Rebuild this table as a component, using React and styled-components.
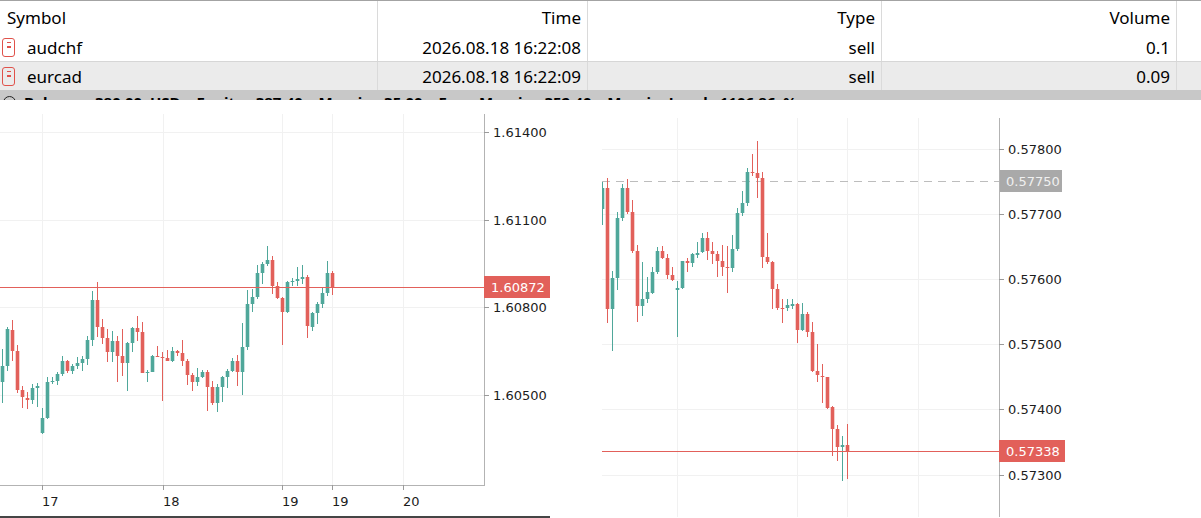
import React from 'react';
import styled, { createGlobalStyle } from 'styled-components';

const GREEN = '#4fa79a';
const RED = '#e2605a';

const orders = [
  { id: 1, symbol: 'audchf', time: '2026.08.18 16:22:08', type: 'sell', volume: '0.1' },
  { id: 2, symbol: 'eurcad', time: '2026.08.18 16:22:09', type: 'sell', volume: '0.09' },
];

// [dir, bodyTop, bodyBottom, wickTop, wickBottom] in page pixels
const leftCandles = [
  ['g', 367, 383, 350, 404], ['g', 330, 367, 328, 372], ['r', 331, 352, 321, 362], ['r', 352, 391, 346, 394],
  ['r', 391, 398, 387, 409], ['r', 399, 401, 393, 410], ['g', 389, 401, 385, 405], ['g', 387, 389, 384, 408],
  ['g', 419, 434, 409, 435], ['g', 383, 419, 378, 420], ['g', 382, 383, 378, 385], ['g', 375, 382, 373, 386],
  ['g', 362, 375, 357, 377], ['r', 362, 372, 361, 374], ['g', 367, 372, 365, 375], ['g', 364, 367, 358, 370],
  ['g', 360, 364, 357, 372], ['g', 341, 360, 337, 366], ['g', 301, 341, 292, 347], ['r', 301, 328, 283, 338],
  ['r', 328, 339, 320, 345], ['r', 339, 353, 330, 363], ['g', 342, 353, 332, 363], ['r', 342, 357, 337, 383],
  ['r', 357, 364, 330, 377], ['g', 344, 364, 343, 392], ['g', 329, 344, 328, 353], ['r', 329, 333, 317, 342],
  ['r', 333, 374, 323, 374], ['g', 373, 374, 371, 383], ['g', 357, 373, 356, 373], ['r', 357, 358, 347, 358],
  ['r', 358, 359, 353, 402], ['r', 359, 362, 351, 362], ['g', 352, 362, 348, 363], ['r', 352, 354, 351, 357],
  ['r', 354, 362, 341, 367], ['r', 362, 376, 360, 386], ['r', 376, 383, 374, 392], ['g', 378, 383, 369, 387],
  ['g', 373, 378, 371, 379], ['r', 373, 388, 371, 412], ['r', 388, 404, 382, 406], ['g', 388, 404, 385, 413],
  ['g', 378, 388, 377, 403], ['g', 372, 378, 370, 389], ['g', 362, 372, 359, 373], ['r', 362, 373, 356, 387],
  ['g', 348, 373, 324, 396], ['g', 305, 348, 291, 351], ['g', 298, 305, 290, 313], ['g', 274, 298, 266, 300],
  ['g', 265, 274, 263, 285], ['g', 261, 265, 247, 267], ['r', 261, 287, 257, 295], ['r', 287, 299, 283, 300],
  ['r', 299, 313, 298, 346], ['g', 283, 313, 282, 314], ['g', 282, 283, 279, 287], ['g', 280, 282, 268, 287],
  ['g', 278, 280, 266, 285], ['r', 278, 327, 276, 339], ['g', 314, 328, 313, 332], ['g', 305, 314, 303, 325],
  ['g', 294, 305, 288, 309], ['g', 274, 294, 262, 297], ['r', 274, 289, 272, 296],
];

const rightCandles = [
  ['g', 189, 210, 183, 226], ['r', 189, 310, 179, 324], ['g', 279, 310, 272, 352], ['g', 219, 279, 213, 291],
  ['g', 189, 219, 185, 222], ['r', 189, 213, 180, 215], ['r', 213, 252, 201, 254], ['r', 252, 307, 246, 323],
  ['g', 300, 307, 263, 317], ['g', 293, 300, 278, 304], ['g', 273, 294, 268, 295], ['g', 252, 273, 248, 275],
  ['r', 252, 259, 247, 260], ['r', 259, 276, 255, 280], ['r', 276, 281, 268, 282], ['g', 289, 291, 282, 338],
  ['g', 262, 289, 262, 290], ['r', 262, 264, 259, 273], ['g', 255, 264, 254, 268], ['g', 254, 256, 243, 259],
  ['g', 239, 253, 234, 254], ['r', 239, 252, 233, 261], ['r', 252, 255, 243, 265], ['r', 255, 262, 252, 278],
  ['r', 262, 268, 246, 277], ['r', 268, 269, 247, 294], ['g', 250, 269, 236, 273], ['g', 214, 250, 209, 252],
  ['g', 204, 214, 192, 217], ['g', 173, 204, 169, 207], ['r', 173, 174, 155, 177], ['r', 174, 179, 142, 199],
  ['r', 179, 258, 173, 269], ['r', 258, 263, 234, 265], ['r', 263, 290, 262, 310], ['r', 290, 309, 285, 311],
  ['r', 309, 310, 300, 324], ['g', 306, 309, 300, 312], ['g', 305, 307, 300, 310], ['r', 305, 331, 304, 344],
  ['g', 315, 331, 304, 332], ['r', 315, 333, 313, 338], ['r', 333, 372, 323, 373], ['r', 372, 376, 345, 383],
  ['r', 377, 378, 365, 404], ['r', 378, 409, 378, 410], ['r', 408, 430, 407, 457], ['r', 430, 448, 426, 462],
  ['g', 446, 448, 437, 482], ['r', 446, 452, 425, 480],
];

const leftChart = {
  view: [0, 101, 550, 415],
  plot: { x1: 0, x2: 484, y1: 115, y2: 486 },
  firstX: 2,
  candles: leftCandles,
  vGrid: [42, 163, 282, 332, 403],
  hGrid: [133, 221, 308, 396],
  yLabels: [[133, '1.61400'], [221, '1.61100'], [308, '1.60800'], [396, '1.60500']],
  xLabels: [[42, '17'], [163, '18'], [282, '19'], [332, '19'], [403, '20']],
  bid: { y: 288, text: '1.60872' },
};

const rightChart = {
  view: [550, 101, 651, 417],
  plot: { x1: 602, x2: 999, y1: 119, y2: 530 },
  firstX: 602,
  candles: rightCandles,
  vGrid: [677, 797, 847, 918],
  hGrid: [150, 215, 280, 345, 410, 476],
  yLabels: [[150, '0.57800'], [215, '0.57700'], [280, '0.57600'], [345, '0.57500'], [410, '0.57400'], [476, '0.57300']],
  xLabels: [],
  level: { y: 182, text: '0.57750' },
  bid: { y: 452, text: '0.57338' },
};

const GlobalStyle = createGlobalStyle`
  html, body {
    margin: 0;
    padding: 0;
    background: #ffffff;
    overflow: hidden;
  }
`;

const Page = styled.div`
  width: 1201px;
  height: 518px;
  display: flex;
  flex-direction: column;
  font-family: "Noto Sans", "Open Sans", sans-serif;
  color: #000;
`;

const Table = styled.div`
  border-top: 1px solid #a3a3a3;
  display: flex;
  flex-direction: column;
`;

const Row = styled.div`
  display: grid;
  grid-template-columns: 378px 210px 294px 295px 1fr;
  height: ${p => (p.$header ? '32px' : '28px')};
  background: ${p => (p.$shaded ? '#ebebeb' : '#ffffff')};
  border-bottom: ${p => (p.$divider ? '1px solid #d6d6d6' : 'none')};
`;

const Cell = styled.div`
  display: flex;
  align-items: center;
  justify-content: ${p => (p.$right ? 'flex-end' : 'flex-start')};
  gap: 12px;
  padding: ${p => (p.$right ? '0 6px 0 0' : p.$header ? '0 0 0 7px' : '0 0 0 2px')};
  border-right: ${p => (p.$last ? 'none' : '1px solid #dadada')};
  font-size: 17px;
  white-space: nowrap;
  overflow: hidden;
`;

const OrderIcon = styled.span`
  position: relative;
  width: 11px;
  height: 17px;
  border: 1.5px solid #e0524b;
  border-radius: 3px;
  flex: none;

  &::before,
  &::after {
    content: "";
    position: absolute;
    left: 3.5px;
    width: 4px;
    height: 1.5px;
    background: #e0524b;
  }
  &::before { top: 3px; }
  &::after { top: 7.5px; }
`;

const StatusBar = styled.div`
  height: 10px;
  background: #c8c8c8;
  overflow: hidden;
  display: flex;
  align-items: flex-start;
  gap: 8px;
  padding-left: 3px;
`;

const StatusDot = styled.span`
  width: 11px;
  height: 11px;
  margin-top: 6px;
  border: 1.5px solid #222;
  border-radius: 50%;
  flex: none;
`;

const StatusText = styled.span`
  font-weight: 700;
  font-size: 15px;
  line-height: 20px;
  padding-top: 2px;
  white-space: nowrap;
  word-spacing: 4px;
`;

const ChartRow = styled.div`
  flex: 1;
  display: flex;
`;

const ChartPanel = styled.div`
  width: ${p => p.$width}px;
  flex: ${p => (p.$grow ? 1 : 'none')};
  border-bottom: ${p => (p.$framed ? '2px solid #454545' : 'none')};
  svg { display: block; }
`;

const AxisText = styled.text`
  font-family: "DejaVu Sans", Verdana, sans-serif;
  font-size: 13px;
  fill: ${p => p.$color || '#1c1c1c'};
`;

function Candle({ x, c }) {
  const [dir, bTop, bBot, wTop, wBot] = c;
  const col = dir === 'g' ? GREEN : RED;
  const h = Math.max(1, bBot - bTop);
  return (
    <g>
      <rect x={x - 0.5} y={wTop} width={1} height={wBot - wTop} fill={col} />
      <rect x={x - 2.5} y={bTop} width={5} height={h} fill={col} opacity={0.3} />
      <rect x={x - 1.5} y={bTop} width={3} height={h} fill={col} />
    </g>
  );
}

function Chart({ cfg, id }) {
  const [vx, vy, vw, vh] = cfg.view;
  const { x1, x2, y1, y2 } = cfg.plot;
  const axisBottom = Math.min(y2, vy + vh);
  return (
    <svg width={vw} height={vh} viewBox={`${vx} ${vy} ${vw} ${vh}`}>
      <defs>
        <clipPath id={id}>
          <rect x={x1} y={y1} width={x2 - x1} height={y2 - y1} />
        </clipPath>
      </defs>
      {cfg.vGrid.map(x => (
        <rect key={'v' + x} x={x} y={y1} width={1} height={y2 - y1} fill="#f1f1f1" />
      ))}
      {cfg.hGrid.map(y => (
        <rect key={'h' + y} x={x1} y={y} width={x2 - x1} height={1} fill="#f1f1f1" />
      ))}
      {cfg.level && (
        <line x1={x1} x2={x2} y1={cfg.level.y + 0.5} y2={cfg.level.y + 0.5}
          stroke="#bdbdbd" strokeDasharray="8 6" />
      )}
      <g clipPath={`url(#${id})`}>
        {cfg.candles.map((c, i) => (
          <Candle key={i} x={cfg.firstX + i * 5 + 0.5} c={c} />
        ))}
      </g>
      <rect x={x1} y={cfg.bid.y} width={x2 - x1} height={1} fill={RED} />

      <rect x={x2} y={y1} width={1} height={axisBottom - y1} fill="#b3b3b3" />
      {cfg.xLabels.length > 0 && (
        <rect x={x1} y={y2} width={x2 - x1 + 1} height={1} fill="#b3b3b3" />
      )}
      {cfg.yLabels.map(([y, t]) => (
        <g key={t}>
          <rect x={x2} y={y} width={5} height={1} fill="#9a9a9a" />
          <AxisText x={x2 + 9} y={y + 5}>{t}</AxisText>
        </g>
      ))}
      {cfg.xLabels.map(([x, t], i) => (
        <g key={i}>
          <rect x={x} y={y2} width={1} height={5} fill="#9a9a9a" />
          <AxisText x={x} y={y2 + 21}>{t}</AxisText>
        </g>
      ))}
      {cfg.level && (
        <g>
          <rect x={x2 + 1} y={cfg.level.y - 11} width={62} height={22} fill="#a9a9a9" />
          <AxisText x={x2 + 7} y={cfg.level.y + 5} $color="#f0f0f0">{cfg.level.text}</AxisText>
        </g>
      )}
      <rect x={x2} y={cfg.bid.y - 11} width={66} height={22} fill={RED} />
      <AxisText x={x2 + 7} y={cfg.bid.y + 5} $color="#ffffff">{cfg.bid.text}</AxisText>
    </svg>
  );
}

export default function App() {
  return (
    <Page>
      <GlobalStyle />
      <Table>
        <Row $header>
          <Cell $header>Symbol</Cell>
          <Cell $right>Time</Cell>
          <Cell $right>Type</Cell>
          <Cell $right>Volume</Cell>
          <Cell $last />
        </Row>
        {orders.map((o, i) => (
          <Row key={o.id} $shaded={i % 2 === 1} $divider={i === 0}>
            <Cell>
              <OrderIcon />
              {o.symbol}
            </Cell>
            <Cell $right>{o.time}</Cell>
            <Cell $right>{o.type}</Cell>
            <Cell $right>{o.volume}</Cell>
            <Cell $last />
          </Row>
        ))}
      </Table>
      <StatusBar>
        <StatusDot />
        <StatusText>
          Balance: 380.00 USD&nbsp; Equity: 387.40&nbsp; Margin: 35.00&nbsp; Free Margin: 352.40&nbsp; Margin Level: 1106.86 %
        </StatusText>
      </StatusBar>
      <ChartRow>
        <ChartPanel $width={550} $framed>
          <Chart cfg={leftChart} id="clipLeft" />
        </ChartPanel>
        <ChartPanel $width={651} $grow>
          <Chart cfg={rightChart} id="clipRight" />
        </ChartPanel>
      </ChartRow>
    </Page>
  );
}
